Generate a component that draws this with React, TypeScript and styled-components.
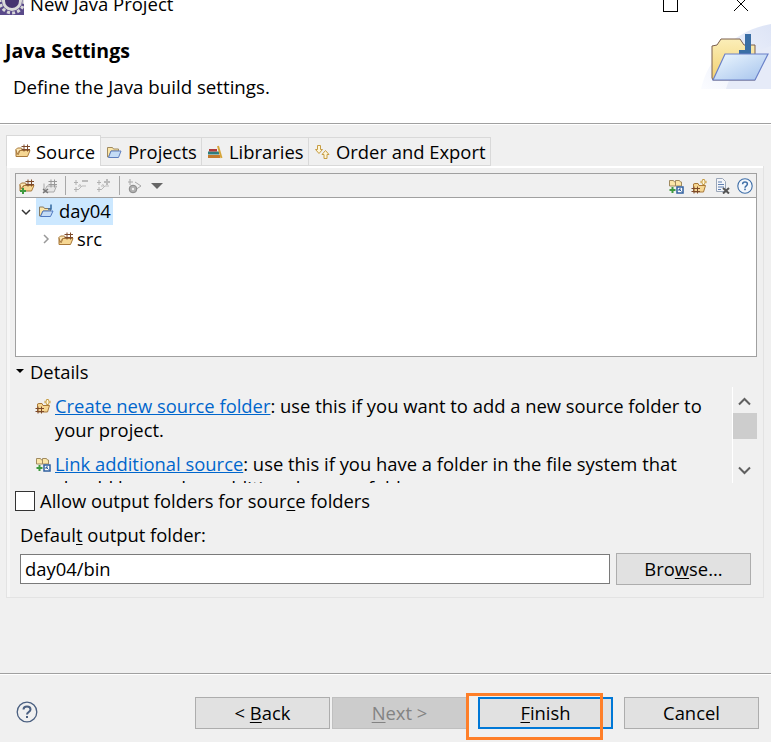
import React from "react";
import styled, { createGlobalStyle } from "styled-components";

const Global = createGlobalStyle`
  html, body { margin: 0; padding: 0; background: #f0f0f0; }
  body { font-family: "Open Sans", "Noto Sans", sans-serif; font-size: 18.4px; color: #000; }
  u { text-underline-offset: 2px; }
`;
const Win = styled.div`
  position: relative; width: 771px; height: 742px; overflow: hidden;
  display: flex; flex-direction: column; background: #f0f0f0;
`;
const TitleBar = styled.div`
  height: 18px; flex: none; background: #fff; display: flex; align-items: flex-end; position: relative;
`;
const TitleIcon = styled.svg`width: 24px; height: 24px; flex: none; margin-bottom: 3px;`;
const TitleText = styled.div`margin-left: 6px; line-height: 24px; margin-bottom: 2px; white-space: nowrap; font-size: 18.5px;`;
const Controls = styled.div`margin-left: auto; display: flex; align-items: flex-end; padding-right: 22px; gap: 55px; margin-bottom: 6px;`;
const Ctl = styled.svg`width: 16px; height: 16px; display: block;`;
const Banner = styled.div`
  height: 105px; flex: none; background: #fff; border-bottom: 1px solid #a0a0a0; display: flex;
  box-shadow: 0 1px 0 #fff; justify-content: space-between;
`;
const BannerText = styled.div`display: flex; flex-direction: column;`;
const BannerTitle = styled.div`margin: 19px 0 0 5px; font-weight: 700; font-size: 19.5px; line-height: 28px;`;
const BannerDesc = styled.div`margin: 9px 0 0 13px; line-height: 26px; font-size: 18.7px;`;
const BannerArt = styled.svg`width: 71px; height: 67px; margin-top: 4px; flex: none;`;
const Content = styled.div`flex: 1; display: flex; flex-direction: column; padding: 11px 7px 0 6px; min-height: 0;`;
const Tabs = styled.div`display: flex; align-items: flex-end; height: 31px;`;
const Tab = styled.div<{ $active?: boolean; $w: number }>`
  width: ${p => p.$w}px; box-sizing: border-box; height: ${p => (p.$active ? 31 : 29)}px;
  background: ${p => (p.$active ? "#fff" : "#f0f0f0")};
  border: 1px solid #d9d9d9; border-bottom: ${p => (p.$active ? "none" : "1px solid #d9d9d9")};
  border-left: ${p => (p.$active ? "1px solid #d9d9d9" : "none")};
  display: flex; align-items: center; gap: ${p => (p.$active ? 5 : 6)}px; padding-left: ${p => (p.$active ? 8 : 5)}px;
  white-space: nowrap;
`;
const Panel = styled.div`
  height: 432px; box-sizing: border-box; border: 1px solid #e3e3e3; border-top: none;
  box-shadow: inset 0 2px 0 #fff, inset 3px 0 0 #f6f6f6; padding: 7px 6px 0 8px; background: #f0f0f0;
  display: flex; flex-direction: column;
`;
const Toolbar = styled.div`
  height: 24px; flex: none; box-sizing: border-box; border: 1px solid #a0a0a0; border-bottom: none;
  display: flex; align-items: center; padding-left: 3px; gap: 7px;
`;
const Sep = styled.div`width: 1px; height: 19px; background: #a8a8a8;`;
const ToolRight = styled.div`margin-left: auto; display: flex; gap: 7px; padding-right: 3px; align-items: center;`;
const Icon16 = styled.svg`width: 16px; height: 16px; flex: none; display: block;`;
const Tree = styled.div`
  height: 160px; flex: none; box-sizing: border-box; background: #fff; border: 1px solid #a0a0a0;
  display: flex; flex-direction: column;
`;
const Row = styled.div<{ $indent: number; $gap: number }>`
  display: flex; align-items: center; height: 27px; padding-left: ${p => p.$indent}px; gap: ${p => p.$gap}px; flex: none;
`;
const Selected = styled.div`
  background: #cce8ff; display: flex; align-items: center; height: 27px; box-sizing: border-box;
  padding: 0 2px 2px 2px; gap: 5px;
`;
const Chevron = styled.svg`width: 10px; height: 10px; flex: none; margin-right: 4px;`;
const DetailsHead = styled.div`display: flex; align-items: center; height: 30px; box-sizing: border-box; padding: 0 0 2px 1px; flex: none; gap: 6px;`;
const Caret = styled.div`width: 0; height: 0; border: 4px solid transparent; border-top: 4px solid #000; margin-top: 4px;`;
const DetailsBody = styled.div`display: flex; height: 96px; flex: none; margin-right: 1px;`;
const DetailsText = styled.div`flex: 1; overflow: hidden; padding: 7px 16px 0 20px;`;
const Entry = styled.div`display: flex; gap: 4px; line-height: 24px; margin-bottom: 10px;`;
const EntryIcon = styled.div`flex: none; margin-top: 4px;`;
const Link = styled.a`color: #0066cc; text-decoration: underline;`;
const Scroll = styled.div`
  width: 24px; flex: none; border-left: 1px solid #fff; background: #f0f0f0; display: flex; flex-direction: column; align-items: center; padding-top: 10px; box-sizing: border-box;
`;
const ScrollArrow = styled.svg`width: 13px; height: 9px; flex: none; display: block;`;
const Thumb = styled.div`width: 24px; height: 26px; background: #cdcdcd; margin-top: 7px;`;
const ScrollGap = styled.div`flex: none; height: 27px;`;
const CheckRow = styled.div`display: flex; align-items: center; height: 20px; margin-top: 8px; gap: 5px; flex: none; line-height: 18px;`;
const Box = styled.div`width: 20px; height: 20px; box-sizing: border-box; background: #fff; border: 1px solid #333;`;
const OutLabel = styled.div`margin: 12px 0 0 5px; line-height: 24px; height: 24px; flex: none;`;
const OutRow = styled.div`display: flex; align-items: center; gap: 6px; margin: 6px 6px 0 5px; flex: none;`;
const Input = styled.div`
  flex: 1; height: 30px; box-sizing: border-box; border: 1px solid #7a7a7a; background: #fff; padding-left: 4px; line-height: 28px;
`;
const Btn = styled.div<{ $disabled?: boolean; $focus?: boolean }>`
  width: 135px; height: 32px; box-sizing: border-box; text-align: center; line-height: ${p => (p.$focus ? 28 : 30)}px; flex: none;
  background: ${p => (p.$disabled ? "#cccccc" : "#e1e1e1")};
  border: ${p => (p.$focus ? "2px solid #0078d7" : "1px solid #adadad")};
  color: ${p => (p.$disabled ? "#838383" : "#000")};
  border-color: ${p => (p.$disabled ? "#bfbfbf" : p.$focus ? "#0078d7" : "#adadad")};
`;
const Spacer = styled.div`flex: 1;`;
const Footer = styled.div`
  height: 69px; box-sizing: border-box; flex: none; border-top: 1px solid #a0a0a0; box-shadow: inset 0 1px 0 #fff; display: flex; align-items: flex-start; padding: 23px 12px 0 16px;
`;
const HelpIcon = styled.svg`width: 22px; height: 22px; flex: none; margin-right: 157px; margin-top: 4px;`;
const BtnGap = styled.div<{ $w: number }>`width: ${p => p.$w}px; flex: none;`;
const Highlight = styled.div`
  position: absolute; left: 466px; top: 693px; width: 137px; height: 47px; box-sizing: border-box; border: 3px solid #fe7f29;
`;

const Pkg = () => (
  <Icon16 viewBox="0 0 16 16">
    <path d="M1 6.5V13.5h11.5l2.5-6H5L3 12" fill="#f6d793" stroke="#a9793a" />
    <path d="M1 6.5L2.5 5h4l1 1.5h5v1H4.5L2 11.5z" fill="#fbe6b4" stroke="#a9793a" />
    <path d="M9 1.5v7M12.5 1.5v7M6.5 3.5h8.5M6.5 6.5h8.5" stroke="#7d4a2a" fill="none" />
  </Icon16>
);
const Plain = () => (
  <Icon16 viewBox="0 0 16 16">
    <path d="M1.5 3.5h5l1 1.5h5v2H5l-2.5 6h-1z" fill="#fbe6a8" stroke="#a08a60" />
    <path d="M2.5 13.5l2.5-6.5h10l-2.5 6.5z" fill="#c4dcf6" stroke="#5f7fbf" />
  </Icon16>
);
const Books = () => (
  <Icon16 viewBox="0 0 16 16">
    <rect x="1" y="11" width="12" height="3" fill="#c47a2c" />
    <rect x="1" y="7.5" width="11" height="3" fill="#2f7d7d" />
    <rect x="2" y="5" width="8" height="2.5" fill="#b03a3a" />
    <path d="M11 2l3.5 12" stroke="#d6a53a" strokeWidth="2" />
  </Icon16>
);
const Order = () => (
  <Icon16 viewBox="0 0 16 16">
    <path d="M3.5 1.5h3v4h2l-3.5 4-3.5-4h2z" fill="#fff6d8" stroke="#c69c42" />
    <path d="M10 14.5v-4H8l3.5-4 3.5 4h-2v4z" fill="#fff6d8" stroke="#c69c42" />
  </Icon16>
);
const ProjectOpen = () => (
  <Icon16 viewBox="0 0 16 16">
    <path d="M1.5 4h4l1 1.5h6V8H5l-2.5 5h-1z" fill="#fbe6a8" stroke="#8a7a60" />
    <path d="M2.5 13.5L5 8h10l-2.5 5.5z" fill="#c4dcf6" stroke="#4f78c0" />
    <path d="M13 1.5V6h-3" stroke="#3a6ea5" strokeWidth="1.6" fill="none" />
  </Icon16>
);
const GreyGear = () => (
  <Icon16 viewBox="0 0 16 16">
    <path d="M3 1v6M1 4h5M8 4l6 4-6 4" fill="none" stroke="#a8a8a8" />
    <circle cx="6" cy="11" r="3.8" fill="#b0b0b0" stroke="#888" />
    <circle cx="6" cy="11" r="1.2" fill="#f0f0f0" />
  </Icon16>
);
const GreyPkg = () => (
  <Icon16 viewBox="0 0 16 16">
    <path d="M2 5.5V14h10l2.5-6H5L3 12" fill="#e6e6e6" stroke="#aaa" />
    <path d="M9 1.5v8M12.5 1.5v8M6.5 3.5h8.5M6.5 6.5h8.5" stroke="#999" fill="none" />
    <path d="M1 11l5 4M6 11l-5 4" stroke="#777" strokeWidth="1.5" />
  </Icon16>
);
const AddPkg = () => (
  <Icon16 viewBox="0 0 16 16">
    <path d="M1 6.5V13h11.5l2.5-5.5H5L3 11" fill="#f6d793" stroke="#a9793a" />
    <path d="M1 6.5L2.5 5h4l1 1.5h5v1H4.5L2 11z" fill="#fbe6b4" stroke="#a9793a" />
    <path d="M9 1.5v7M12.5 1.5v7M6.5 3.5h8.5M6.5 6.5h8.5" stroke="#7d4a2a" fill="none" />
    <path d="M4 10v6M1 13h6" stroke="#3f9a3f" strokeWidth="2" />
  </Icon16>
);
const Move = ({ plus }: { plus?: boolean }) => (
  <Icon16 viewBox="0 0 16 16">
    <path d="M3 2v5M1 4.5h4M3 9v5M1 11.5h4" stroke="#b0b0b0" fill="none" />
    <path d="M5 8h3l-1.5-2M5 12l4-4h4" stroke="#bbb" fill="none" />
    {plus ? <path d="M11 1v6M8 4h6" stroke="#bbb" strokeWidth="2" /> : <path d="M9 3h6" stroke="#bbb" strokeWidth="2" />}
  </Icon16>
);
const LinkSrc = () => (
  <Icon16 viewBox="0 0 16 16">
    <path d="M1.5 2.5h4l1 1.5h1V8h-6z" fill="#fbe6a8" stroke="#a08a60" />
    <path d="M7.5 2.5h4l1 1.5h1V8h-6z" fill="#fbe6a8" stroke="#a08a60" />
    <path d="M4.5 9v6M1.5 12h6" stroke="#3f9a3f" strokeWidth="2" />
    <rect x="9" y="9" width="6" height="6" fill="#fff" stroke="#2f5f9f" strokeWidth="1.5" />
    <path d="M11 11l2.5 2.5M11 13v-2h2" stroke="#2f5f9f" fill="none" />
  </Icon16>
);
const NewSrc = () => (
  <Icon16 viewBox="0 0 16 16">
    <path d="M2.5 6V14h10l2-6.5H8L7 5.5H4z" fill="#f6d793" stroke="#a9793a" />
    <path d="M3 8.5v7M6.5 8.5v7M0.5 10.5h8.5M0.5 13.5h8.5" stroke="#7d4a2a" fill="none" />
    <path d="M12.5 1v6M9.5 4h6" stroke="#c69c42" strokeWidth="2.4" />
    <path d="M12.5 2v4M10.5 4h4" stroke="#fff6d8" strokeWidth="1" />
  </Icon16>
);
const Doc = () => (
  <Icon16 viewBox="0 0 16 16">
    <path d="M2.5 0.5h6l3 3v10h-9z" fill="#f4f6fa" stroke="#9aa6b8" />
    <path d="M4 4h4M4 6.5h6M4 9h6M4 11.5h3" stroke="#5f7fb0" />
    <path d="M9 10l6 5.5M15 10l-6 5.5" stroke="#555" strokeWidth="2" />
  </Icon16>
);
const Help = () => (
  <Icon16 viewBox="0 0 16 16">
    <circle cx="8" cy="8" r="7.2" fill="#f4f7fc" stroke="#3f6fa8" strokeWidth="1.1" />
    <path d="M5.6 6.2C5.6 4.8 6.7 4 8 4s2.4.8 2.4 2.1c0 1.7-2.4 1.7-2.4 3.6" fill="none" stroke="#3f6fa8" strokeWidth="1.5" />
    <rect x="7.2" y="10.6" width="1.6" height="1.6" fill="#3f6fa8" />
  </Icon16>
);

export default function App() {
  return (
    <Win>
      <Global />
      <TitleBar>
        <TitleIcon viewBox="0 0 24 24">
          <rect width="24" height="24" fill="#5a4a8a" />
          <circle cx="12" cy="10" r="12" fill="none" stroke="#d8d8d8" strokeWidth="3" strokeDasharray="3 2.2" />
          <circle cx="12" cy="10" r="10" fill="#d8d8d8" />
          <circle cx="12" cy="10" r="7" fill="#453370" />
        </TitleIcon>
        <TitleText>New Java Project</TitleText>
        <Controls>
          <Ctl viewBox="0 0 16 16"><rect x="1.5" y="0.5" width="14" height="15" fill="none" stroke="#000" /></Ctl>
          <Ctl viewBox="0 0 16 16"><path d="M1 1l14 14M15 1L1 15" stroke="#000" fill="none" /></Ctl>
        </Controls>
      </TitleBar>
      <Banner>
        <BannerText>
          <BannerTitle>Java Settings</BannerTitle>
          <BannerDesc>Define the Java build settings.</BannerDesc>
        </BannerText>
        <BannerArt viewBox="0 0 71 67">
          <defs>
            <linearGradient id="bg" x1="0" y1="1" x2="1" y2="0">
              <stop offset="0" stopColor="#fbfcff" />
              <stop offset="1" stopColor="#dde4f6" />
            </linearGradient>
            <linearGradient id="fr" x1="0" y1="0" x2="1" y2="1">
              <stop offset="0" stopColor="#eef8ff" />
              <stop offset="1" stopColor="#a4c2ec" />
            </linearGradient>
            <linearGradient id="bk" x1="0" y1="0" x2="0" y2="1">
              <stop offset="0" stopColor="#fbeeb8" />
              <stop offset="1" stopColor="#f2d070" />
            </linearGradient>
          </defs>
          <path d="M1 67C8 35 35 8 71 2V67z" fill="url(#bg)" />
          <path d="M26 67C32 45 50 30 71 24V67z" fill="#e6ebf8" />
          <path d="M12 24l5-1 4-6h19l4 6h11v35H13l-1-2z" fill="url(#bk)" stroke="#7a5f4f" />
          <path d="M45 12h6v20H39v-4h6z" fill="#3a6ea5" />
          <path d="M13 58l12-26h43L55 58z" fill="url(#fr)" stroke="#6a80c8" strokeWidth="1.2" />
        </BannerArt>
      </Banner>
      <Content>
        <Tabs>
          <Tab $active $w={95}><Pkg /><span>Source</span></Tab>
          <Tab $w={101}><Plain /><span>Projects</span></Tab>
          <Tab $w={107}><Books /><span>Libraries</span></Tab>
          <Tab $w={182}><Order /><span>Order and Export</span></Tab>
        </Tabs>
        <Panel>
          <Toolbar>
            <AddPkg />
            <GreyPkg />
            <Sep />
            <Move />
            <Move plus />
            <Sep />
            <GreyGear />
            <svg width="14" height="8" viewBox="0 0 14 8"><path d="M1 1h12L7 7z" fill="#666" /></svg>
            <ToolRight>
              <LinkSrc />
              <NewSrc />
              <Doc />
              <Help />
            </ToolRight>
          </Toolbar>
          <Tree>
            <Row $indent={5} $gap={1}>
              <Chevron viewBox="0 0 10 10"><path d="M1 3l4 4 4-4" fill="none" stroke="#333" strokeWidth="1.5" /></Chevron>
              <Selected><ProjectOpen /><span>day04</span></Selected>
            </Row>
            <Row $indent={25} $gap={3}>
              <Chevron viewBox="0 0 10 10"><path d="M3 1l4 4-4 4" fill="none" stroke="#999" strokeWidth="1.5" /></Chevron>
              <Pkg /><span>src</span>
            </Row>
          </Tree>
          <DetailsHead><Caret /><span>Details</span></DetailsHead>
          <DetailsBody>
            <DetailsText>
              <Entry>
                <EntryIcon><NewSrc /></EntryIcon>
                <div><Link>Create new source folder</Link>: use this if you want to add a new source folder to your project.</div>
              </Entry>
              <Entry>
                <EntryIcon><LinkSrc /></EntryIcon>
                <div><Link>Link additional source</Link>: use this if you have a folder in the file system that should be used as additional source folder.</div>
              </Entry>
            </DetailsText>
            <Scroll>
              <ScrollArrow viewBox="0 0 13 9"><path d="M1 7.5l5.5-5.5 5.5 5.5" fill="none" stroke="#606060" strokeWidth="2" /></ScrollArrow>
              <Thumb />
              <ScrollGap />
              <ScrollArrow viewBox="0 0 13 9"><path d="M1 1.5l5.5 5.5 5.5-5.5" fill="none" stroke="#606060" strokeWidth="2" /></ScrollArrow>
            </Scroll>
          </DetailsBody>
          <CheckRow><Box /><span>Allow output folders for sour<u>c</u>e folders</span></CheckRow>
          <OutLabel>Defaul<u>t</u> output folder:</OutLabel>
          <OutRow>
            <Input>day04/bin</Input>
            <Btn>Bro<u>w</u>se...</Btn>
          </OutRow>
        </Panel>
        <Spacer />
      </Content>
      <Footer>
        <HelpIcon viewBox="0 0 22 22">
          <circle cx="11" cy="11" r="9.8" fill="none" stroke="#4a5f80" strokeWidth="1.3" />
          <path d="M7.5 8.5C7.5 6.5 9 5.5 11 5.5s3.5 1 3.5 3c0 2.5-3.5 2.5-3.5 5" fill="none" stroke="#4a5f80" strokeWidth="2" />
          <rect x="10" y="15" width="2" height="2" fill="#4a5f80" />
        </HelpIcon>
        <Btn>&lt; <u>B</u>ack</Btn>
        <BtnGap $w={2} />
        <Btn $disabled><u>N</u>ext &gt;</Btn>
        <BtnGap $w={11} />
        <Btn $focus><u>F</u>inish</Btn>
        <BtnGap $w={11} />
        <Btn>Cancel</Btn>
      </Footer>
      <Highlight />
    </Win>
  );
}
